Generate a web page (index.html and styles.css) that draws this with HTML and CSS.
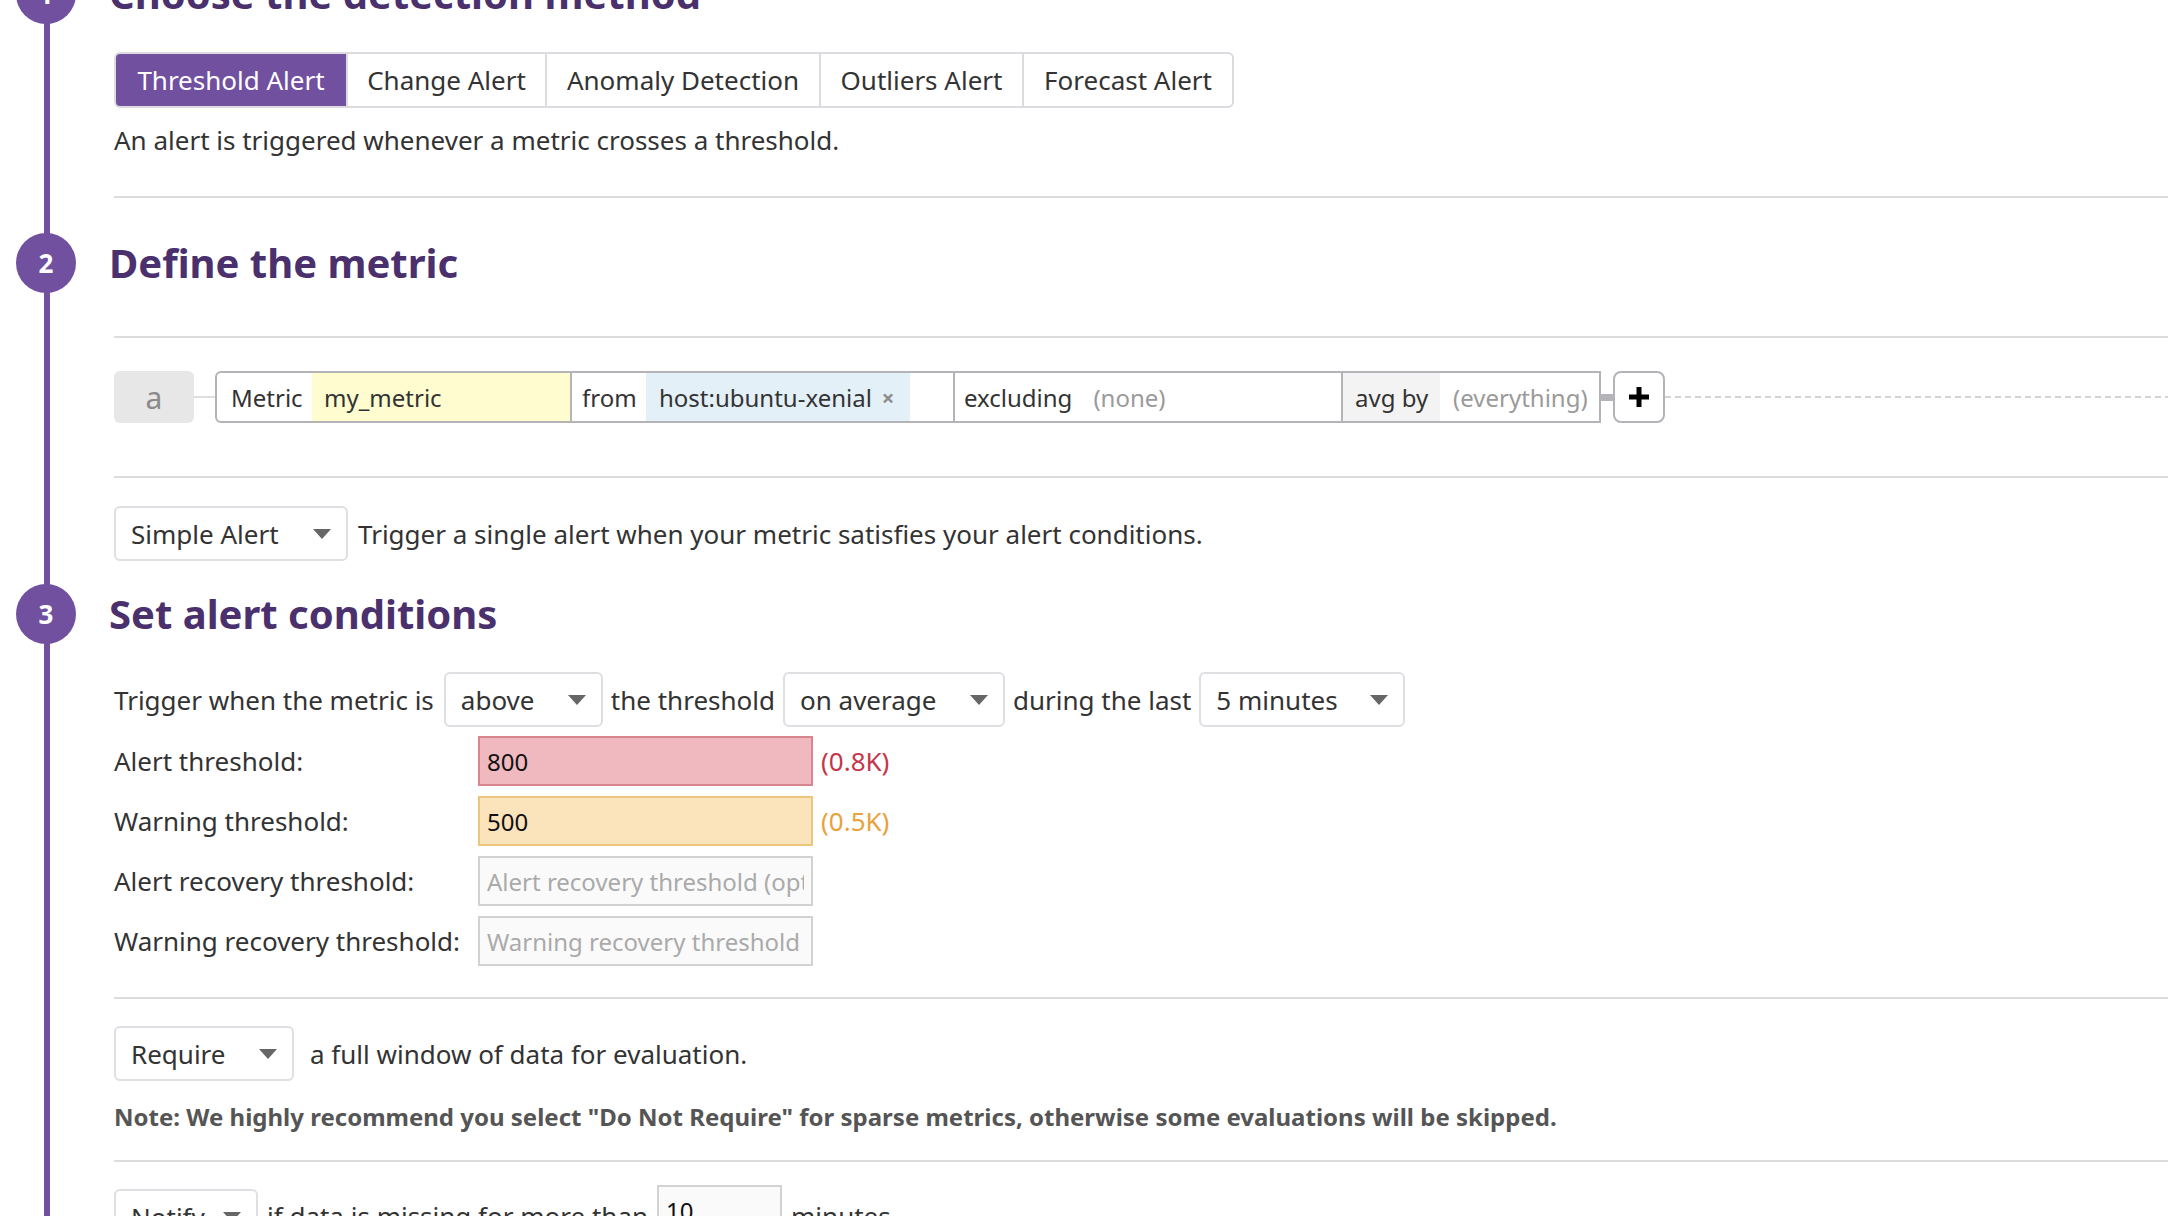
FILE: index.html
```html
<!DOCTYPE html>
<html>
<head>
<meta charset="utf-8">
<title>New Monitor</title>
<link rel="stylesheet" href="styles.css">
</head>
<body>
<div class="page">
  <div class="step-head step-head-1"><span class="step-num">1</span><h2 class="step-title">Choose the detection method</h2></div>
  <div class="step-body">
    <div class="tabs">
      <div class="tab tab-active tab-threshold">Threshold Alert</div>
      <div class="tab tab-change">Change Alert</div>
      <div class="tab tab-anomaly">Anomaly Detection</div>
      <div class="tab tab-outliers">Outliers Alert</div>
      <div class="tab tab-forecast">Forecast Alert</div>
    </div>
    <p class="desc">An alert is triggered whenever a metric crosses a threshold.</p>
    <hr class="rule rule-1">
  </div>

  <div class="step-head step-head-2"><span class="step-num">2</span><h2 class="step-title">Define the metric</h2></div>
  <div class="step-body">
    <hr class="rule rule-2">
    <div class="query-row">
      <div class="query-letter">a</div>
      <div class="query-link"></div>
      <div class="query">
        <div class="q-cell q-metric-label">Metric</div>
        <div class="q-cell q-metric">my_metric</div>
        <div class="q-cell q-from">from</div>
        <div class="q-cell q-tags"><span class="tag">host:ubuntu-xenial<span class="tag-x">×</span></span></div>
        <div class="q-cell q-excl">excluding<span class="q-ph q-none">(none)</span></div>
        <div class="q-cell q-avg">avg by</div>
        <div class="q-cell q-every q-ph">(everything)</div>
      </div>
      <div class="q-connector"></div>
      <div class="q-add"><svg width="20" height="20" viewBox="0 0 20 20"><rect x="7.5" y="0" width="5" height="20" fill="#000"/><rect x="0" y="7.5" width="20" height="5" fill="#000"/></svg></div>
      <div class="q-dash"></div>
    </div>
    <hr class="rule rule-3">
    <div class="row row-simple">
      <div class="select sel-simple"><span>Simple Alert</span><span class="caret"></span></div>
      <span>Trigger a single alert when your metric satisfies your alert conditions.</span>
    </div>
  </div>

  <div class="step-head step-head-3"><span class="step-num">3</span><h2 class="step-title">Set alert conditions</h2></div>
  <div class="step-body">
    <div class="row row-trigger">
      <span class="trigger-lead">Trigger when the metric is</span>
      <div class="select sel-above"><span>above</span><span class="caret"></span></div>
      <span>the threshold</span>
      <div class="select sel-avg"><span>on average</span><span class="caret"></span></div>
      <span>during the last</span>
      <div class="select sel-min"><span>5 minutes</span><span class="caret"></span></div>
    </div>
    <div class="thresholds">
      <label class="th-label">Alert threshold:</label>
      <input class="th-input th-alert" type="text" value="800">
      <span class="th-k th-k-alert">(0.8K)</span>

      <label class="th-label">Warning threshold:</label>
      <input class="th-input th-warn" type="text" value="500">
      <span class="th-k th-k-warn">(0.5K)</span>

      <label class="th-label">Alert recovery threshold:</label>
      <input class="th-input th-rec" type="text" placeholder="Alert recovery threshold (optional)">
      <span></span>

      <label class="th-label">Warning recovery threshold:</label>
      <input class="th-input th-rec" type="text" placeholder="Warning recovery threshold (optional)">
      <span></span>
    </div>
    <hr class="rule rule-4">
    <div class="row row-require">
      <div class="select sel-require"><span>Require</span><span class="caret"></span></div>
      <span>a full window of data for evaluation.</span>
    </div>
    <p class="note">Note: We highly recommend you select "Do Not Require" for sparse metrics, otherwise some evaluations will be skipped.</p>
    <hr class="rule rule-5">
    <div class="row row-notify">
      <div class="select sel-notify"><span>Notify</span><span class="caret"></span></div>
      <span>if data is missing for more than</span>
      <input class="th-input th-rec notify-input" type="text" value="10">
      <span>minutes.</span>
    </div>
  </div>
</div>
</body>
</html>
```

FILE: styles.css
```css
* { box-sizing: border-box; }
html, body { margin: 0; padding: 0; background: #fff; }
body {
  font-family: "Noto Sans", "Open Sans", sans-serif;
  font-size: 26px;
  color: #333;
  width: 2168px;
  height: 1216px;
  overflow: hidden;
}
.page {
  margin-top: -36px;
  padding-bottom: 200px;
  background: linear-gradient(#7150a0, #7150a0) 44px 0 / 6px 100% no-repeat;
}
.step-head {
  display: flex;
  align-items: center;
  gap: 33px;
  padding-left: 16px;
  height: 60px;
}
.step-num {
  flex: none;
  width: 60px;
  height: 60px;
  border-radius: 50%;
  background: #7150a0;
  color: #fff;
  font-weight: 700;
  font-size: 26px;
  display: flex;
  align-items: center;
  justify-content: center;
}
.step-title {
  margin: 0;
  font-size: 40px;
  font-weight: 700;
  color: #4a306c;
  line-height: 60px;
}
.step-head-2 { margin-top: 35px; }
.step-head-3 { margin-top: 23px; }
.step-body { padding-left: 114px; }

.rule { border: 0; height: 2px; background: #dcdcdc; margin: 0; }
.rule-1 { margin-top: 38px; }
.rule-2 { margin-top: 43px; }
.rule-3 { margin-top: 53px; }
.rule-4 { margin-top: 31px; }
.rule-5 { margin-top: 25px; }

/* tabs */
.tabs {
  display: inline-flex;
  margin-top: 28px;
  height: 56px;
  border: 2px solid #dcdce0;
  border-radius: 6px;
  overflow: hidden;
}
.tab {
  display: flex;
  align-items: center;
  justify-content: center;
  border-left: 2px solid #dcdce0;
  color: #333;
  white-space: nowrap;
}
.tab:first-child { border-left: 0; }
.tab-active { background: #7150a0; color: #fff; }
.tab-threshold { width: 230px; }
.tab-change { width: 199px; }
.tab-anomaly { width: 274px; }
.tab-outliers { width: 203px; }
.tab-forecast { width: 210px; }

.desc { margin: 14px 0 0; line-height: 36px; }

/* query */
.query-row {
  display: flex;
  align-items: center;
  margin-top: 33px;
  height: 52px;
  font-size: 24px;
}
.query-letter {
  flex: none;
  width: 80px;
  height: 52px;
  border-radius: 6px;
  background: #e7e7e7;
  color: #8a8a8a;
  font-size: 30px;
  display: flex;
  align-items: center;
  justify-content: center;
}
.query-link { flex: none; width: 21px; height: 2px; background: #dedede; }
.query {
  flex: none;
  display: flex;
  width: 1386px;
  height: 52px;
  border: 2px solid #b4b4b8;
  border-radius: 6px 0 0 6px;
  overflow: hidden;
}
.q-cell {
  display: flex;
  align-items: center;
  white-space: nowrap;
  height: 100%;
}
.q-metric-label { width: 95px; padding-left: 14px; }
.q-metric { width: 258px; padding-left: 12px; background: #fffdd0; }
.q-from { width: 76px; padding-left: 10px; border-left: 2px solid #b4b4b8; }
.q-tags { width: 307px; }
.tag {
  display: flex;
  align-items: center;
  height: 100%;
  width: 264px;
  padding-left: 13px;
  background: #e4f0f7;
}
.tag-x { margin-left: 10px; color: #8c8c8c; font-weight: 700; font-size: 22px; }
.q-excl { width: 388px; padding-left: 9px; border-left: 2px solid #b4b4b8; }
.q-none { margin-left: 21px; }
.q-ph { color: #9a9a9a; }
.q-avg { width: 99px; padding-left: 12px; border-left: 2px solid #b4b4b8; background: #f3f3f3; }
.q-every { flex: 1; padding-left: 13px; }
.q-connector { flex: none; width: 12px; height: 7px; background: #b4b4b8; }
.q-add {
  flex: none;
  width: 52px;
  height: 52px;
  border: 2px solid #b4b4b8;
  border-radius: 8px;
  display: flex;
  align-items: center;
  justify-content: center;
}
.q-dash {
  flex: 1;
  height: 2px;
  background: repeating-linear-gradient(90deg, #d4d4d4 0 6px, transparent 6px 10px);
}

/* rows & selects */
.row { display: flex; align-items: center; white-space: nowrap; }
.row-simple { margin-top: 28px; gap: 10px; }
.row-trigger { margin-top: 28px; gap: 8px; }
.trigger-lead { margin-right: 2px; }
.row-require { margin-top: 27px; gap: 16px; }
.row-notify { margin-top: 27px; gap: 9px; align-items: flex-start; }
.row-notify > span { line-height: 55px; }
.select {
  flex: none;
  display: flex;
  align-items: center;
  justify-content: space-between;
  height: 55px;
  padding: 0 15px;
  border: 2px solid #dfdfe3;
  border-radius: 6px;
  background: #fff;
  color: #333;
}
.caret {
  width: 0;
  height: 0;
  border-left: 9px solid transparent;
  border-right: 9px solid transparent;
  border-top: 10px solid #666;
}
.sel-simple { width: 234px; }
.sel-above { width: 159px; }
.sel-avg { width: 222px; }
.sel-min { width: 206px; }
.sel-require { width: 180px; }
.sel-notify { width: 144px; }

/* thresholds */
.thresholds {
  display: grid;
  grid-template-columns: 364px 335px auto;
  grid-auto-rows: 50px;
  row-gap: 10px;
  align-items: center;
  margin-top: 9px;
}
.th-label { color: #333; }
.th-input {
  width: 335px;
  height: 50px;
  padding: 0 7px;
  font-family: "Noto Sans", "Open Sans", sans-serif;
  font-size: 24px;
  color: #111;
  border: 2px solid #d2d2d2;
  border-radius: 0;
  background: #fafafa;
  outline: none;
}
.th-input::placeholder { color: #aaa; }
.th-alert { background: #f0b9c0; border-color: #d7858f; }
.th-warn { background: #fbe3bb; border-color: #ecc67d; }
.th-k { margin-left: 8px; }
.th-k-alert { color: #c5364a; }
.th-k-warn { color: #e9a23b; }
.notify-input { width: 125px; margin-top: -4px; }

.note {
  margin: 18px 0 0;
  line-height: 36px;
  font-size: 24px;
  font-weight: 700;
  color: #555;
}
```
